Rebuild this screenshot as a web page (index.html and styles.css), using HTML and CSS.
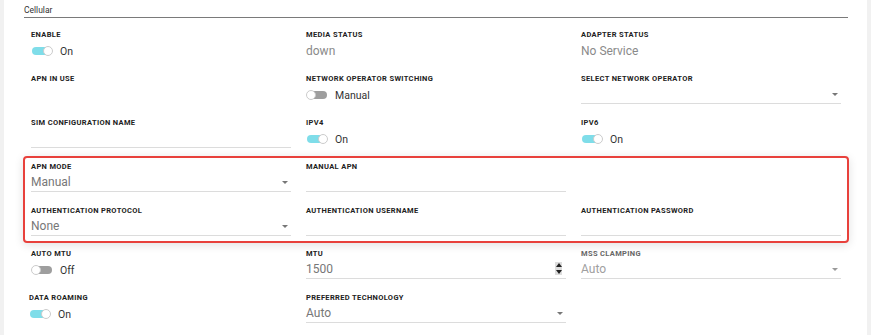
FILE: index.html
```html
<!DOCTYPE html>
<html lang="en">
<head>
    <meta charset="UTF-8">
    <meta name="viewport" content="width=device-width, initial-scale=1.0">
    <title>Cellular</title>
    <link rel="stylesheet" href="styles.css">
</head>
<body>

<div class="panel">
    <div class="section">
        <div class="section-title">Cellular</div>

        <div class="grid">
            <div class="field">
                <div class="label">Enable</div>
                <div class="toggle on"><span class="track"><span class="knob"></span></span>On</div>
            </div>
            <div class="field">
                <div class="label">Media Status</div>
                <div class="status">down</div>
            </div>
            <div class="field">
                <div class="label">Adapter Status</div>
                <div class="status">No Service</div>
            </div>

            <div class="field">
                <div class="label">APN in use</div>
            </div>
            <div class="field">
                <div class="label">Network Operator Switching</div>
                <div class="toggle"><span class="track"><span class="knob"></span></span>Manual</div>
            </div>
            <div class="field">
                <div class="label">Select Network Operator</div>
                <div class="input select"><span class="value"></span><span class="arrow"></span></div>
            </div>

            <div class="field">
                <div class="label">SIM Configuration Name</div>
                <div class="input"><span class="value"></span></div>
            </div>
            <div class="field">
                <div class="label">IPv4</div>
                <div class="toggle on"><span class="track"><span class="knob"></span></span>On</div>
            </div>
            <div class="field">
                <div class="label">IPv6</div>
                <div class="toggle on"><span class="track"><span class="knob"></span></span>On</div>
            </div>
        </div>

        <div class="grid highlight">
            <div class="field">
                <div class="label">APN Mode</div>
                <div class="input select"><span class="value">Manual</span><span class="arrow"></span></div>
            </div>
            <div class="field">
                <div class="label">Manual APN</div>
                <div class="input"><span class="value"></span></div>
            </div>
            <div class="field"></div>

            <div class="field">
                <div class="label">Authentication Protocol</div>
                <div class="input select"><span class="value">None</span><span class="arrow"></span></div>
            </div>
            <div class="field">
                <div class="label">Authentication Username</div>
                <div class="input"><span class="value"></span></div>
            </div>
            <div class="field">
                <div class="label">Authentication Password</div>
                <div class="input"><span class="value"></span></div>
            </div>
        </div>

        <div class="grid">
            <div class="field">
                <div class="label">Auto MTU</div>
                <div class="toggle"><span class="track"><span class="knob"></span></span>Off</div>
            </div>
            <div class="field">
                <div class="label">MTU</div>
                <div class="input"><span class="value">1500</span><span class="spinner"><span class="up"></span><span class="down"></span></span></div>
            </div>
            <div class="field disabled">
                <div class="label">MSS Clamping</div>
                <div class="input select"><span class="value">Auto</span><span class="arrow"></span></div>
            </div>

            <div class="field roaming">
                <div class="label">Data Roaming</div>
                <div class="toggle on"><span class="track"><span class="knob"></span></span>On</div>
            </div>
            <div class="field">
                <div class="label">Preferred Technology</div>
                <div class="input select"><span class="value">Auto</span><span class="arrow"></span></div>
            </div>
            <div class="field"></div>
        </div>
    </div>
</div>

</body>
</html>
```

FILE: styles.css
```css
html, body {
    margin: 0;
    height: 100%;
}
body {
    font-family: Roboto, "Liberation Sans", Arial, sans-serif;
    background-color: #f1f1f1;
    overflow: hidden;
}
.panel {
    background-color: #fff;
    margin: 0 4px 0 4px;
    height: 100%;
    padding-top: 5px;
    box-sizing: border-box;
}
.section {
    margin-left: 20px;
    width: 824px;
}
.section-title {
    font-size: 8.5px;
    color: #333;
    line-height: 11px;
    padding-bottom: 1px;
    border-bottom: 1.5px solid #7a7a7a;
    margin-bottom: 12px;
}
.grid {
    display: grid;
    grid-template-columns: repeat(3, 260px);
    column-gap: 15px;
    row-gap: 12px;
    padding: 0 7px;
}
.highlight {
    margin: 6px -1px 6px -1px;
    padding: 4px 6px 3px 6px;
    border: 2px solid #e8413c;
    border-radius: 4px;
    box-shadow: 0 2px 10px rgba(0, 0, 0, 0.12);
}
.field {
    height: 32px;
}
.label {
    font-size: 7.5px;
    font-weight: bold;
    letter-spacing: 0.35px;
    text-transform: uppercase;
    color: #222;
    line-height: 10px;
}
.status {
    font-size: 12px;
    color: #8a8a8a;
    line-height: 14px;
    margin-top: 4px;
}
.toggle {
    display: flex;
    align-items: center;
    font-size: 10.5px;
    color: #333;
    margin-top: 4px;
    height: 14px;
}
.track {
    position: relative;
    width: 20px;
    height: 8px;
    border-radius: 4px;
    background-color: #9e9e9e;
    margin: 0 8px 0 1px;
}
.toggle.on .track {
    background-color: #7fdde9;
}
.knob {
    position: absolute;
    top: -1px;
    left: -1px;
    width: 8px;
    height: 8px;
    border-radius: 50%;
    background-color: #fff;
    border: 1px solid #ccc;
}
.toggle.on .knob {
    left: auto;
    right: -1px;
}
.input {
    display: flex;
    align-items: center;
    height: 19px;
    border-bottom: 1px solid #dcdcdc;
}
.value {
    flex: 1;
    font-size: 12px;
    color: #777;
}
.arrow {
    width: 0;
    height: 0;
    border-left: 3px solid transparent;
    border-right: 3px solid transparent;
    border-top: 3px solid #777;
    margin-right: 3px;
    margin-top: 1px;
}
.spinner {
    display: flex;
    flex-direction: column;
    width: 7px;
    height: 13px;
    background-color: #ddd;
    margin-right: 4px;
}
.spinner span {
    flex: 1;
    display: flex;
    justify-content: center;
    align-items: center;
}
.spinner .up::before {
    content: "";
    border-left: 3px solid transparent;
    border-right: 3px solid transparent;
    border-bottom: 4px solid #222;
}
.spinner .down::before {
    content: "";
    border-left: 3px solid transparent;
    border-right: 3px solid transparent;
    border-top: 4px solid #222;
}
.disabled .label {
    color: #666;
}
.disabled .value {
    color: #a0a0a0;
}
.disabled .arrow {
    border-top-color: #999;
}
.roaming {
    margin-left: -2px;
}
```
